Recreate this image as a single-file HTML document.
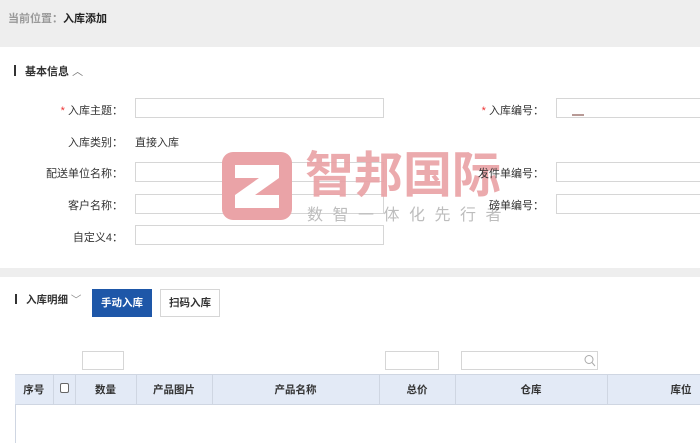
<!DOCTYPE html>
<html><head><meta charset="utf-8"><style>
*{margin:0;padding:0;box-sizing:border-box}
body{width:700px;height:443px;overflow:hidden;background:#fff;font-family:"Liberation Sans","Noto Sans CJK SC",sans-serif;font-size:11px;color:#333;position:relative}
.a{position:absolute}
.inp{position:absolute;border:1px solid #d6d6d6;background:#fff;height:20px}
.lbl{position:absolute;text-align:right;width:150px;font-size:11px;color:#333;white-space:nowrap;z-index:5}
.star{color:#e33}
th,td{border-right:1px solid #cfd6e2;font-weight:bold;font-size:10.5px;color:#333}
</style></head><body>
<div class="a" style="left:0;top:0;width:700px;height:47px;background:#eeeeee"></div>
<div class="a" style="left:8px;top:10px;font-size:11px;color:#999;font-weight:bold">当前位置：<span style="color:#222">入库添加</span></div>
<div class="a" style="left:14px;top:65px;width:2px;height:11px;background:#333"></div>
<div class="a" style="left:25px;top:63px;font-weight:bold;font-size:11px;color:#333">基本信息 <span style="font-weight:normal;color:#777">︿</span></div>

<div class="lbl" style="left:-27px;top:102px"><span class="star">* </span>入库主题：</div>
<div class="inp" style="left:135px;top:98px;width:249px"></div>
<div class="lbl" style="left:-27px;top:134px">入库类别：</div>
<div class="a" style="left:135px;top:134px">直接入库</div>
<div class="lbl" style="left:-27px;top:165px">配送单位名称：</div>
<div class="inp" style="left:135px;top:162px;width:249px"></div>
<div class="lbl" style="left:-27px;top:197px">客户名称：</div>
<div class="inp" style="left:135px;top:194px;width:249px"></div>
<div class="lbl" style="left:-27px;top:229px">自定义4：</div>
<div class="inp" style="left:135px;top:225px;width:249px"></div>

<div class="lbl" style="left:394px;top:102px"><span class="star">* </span>入库编号：</div>
<div class="inp" style="left:556px;top:98px;width:150px"></div>
<div class="a" style="left:572px;top:114px;width:12px;height:2px;background:#b89a96"></div>
<div class="lbl" style="left:394px;top:165px">发件单编号：</div>
<div class="inp" style="left:556px;top:162px;width:150px"></div>
<div class="lbl" style="left:394px;top:197px">磅单编号：</div>
<div class="inp" style="left:556px;top:194px;width:150px"></div>

<!-- watermark -->
<div class="a" style="left:222px;top:152px;width:70px;height:68px;background:#eaa3a7;border-radius:11px"></div>
<svg class="a" style="left:222px;top:152px" width="70" height="68"><path d="M13 13H57V26L33 43H57V56H13V43L37 26H13Z" fill="#fff"/></svg>
<div class="a" style="left:305px;top:144px;font-size:49px;line-height:56px;color:#eaa3a7;font-weight:bold;font-family:'Noto Sans CJK SC',sans-serif;opacity:.92">智邦国际</div>
<div class="a" style="left:307px;top:204px;font-size:16px;line-height:18px;color:#bdbdbd;letter-spacing:9.5px;font-family:'Noto Sans CJK SC',sans-serif">数智一体化先行者</div>

<div class="a" style="left:0;top:268px;width:700px;height:9px;background:#eeeeee"></div>
<div class="a" style="left:15px;top:294px;width:2px;height:10px;background:#333"></div>
<div class="a" style="left:26px;top:292px;font-weight:bold;font-size:10.5px">入库明细 <span style="font-weight:normal;color:#888">﹀</span></div>
<div class="a" style="left:92px;top:289px;width:60px;height:28px;background:#1e57a8;color:#fff;font-weight:bold;font-size:10.5px;text-align:center;line-height:28px">手动入库</div>
<div class="a" style="left:160px;top:289px;width:60px;height:28px;border:1px solid #d6d6d6;font-weight:bold;font-size:10.5px;text-align:center;line-height:26px">扫码入库</div>

<div class="inp" style="left:82px;top:351px;width:42px;height:19px"></div>
<div class="inp" style="left:385px;top:351px;width:54px;height:19px"></div>
<div class="inp" style="left:461px;top:351px;width:137px;height:19px"></div>
<svg class="a" style="left:584px;top:354px" width="12" height="13"><circle cx="5" cy="5.5" r="4" fill="none" stroke="#aaa" stroke-width="1"/><path d="M8 8.5L11 12" stroke="#aaa"/></svg>

<div class="a" style="left:15px;top:374px;width:685px;height:69px;border-left:1px solid #cfd6e2"></div>
<table class="a" style="left:15px;top:374px;width:700px;height:31px;border-collapse:collapse;background:#e3eaf6;border-top:1px solid #cfd6e2;border-bottom:1px solid #cfd6e2;table-layout:fixed">
<tr>
<td style="width:38px;text-align:center">序号</td>
<td style="width:22px;text-align:center"><span style="display:inline-block;width:9px;height:10px;border:1px solid #666;border-radius:2px;background:#fff"></span></td>
<td style="width:61px;text-align:center">数量</td>
<td style="width:76px;text-align:center">产品图片</td>
<td style="width:167px;text-align:center">产品名称</td>
<td style="width:76px;text-align:center">总价</td>
<td style="width:152px;text-align:center">仓库</td>
<td style="text-align:left;padding-left:63px">库位</td>
</tr></table>
</body></html>
